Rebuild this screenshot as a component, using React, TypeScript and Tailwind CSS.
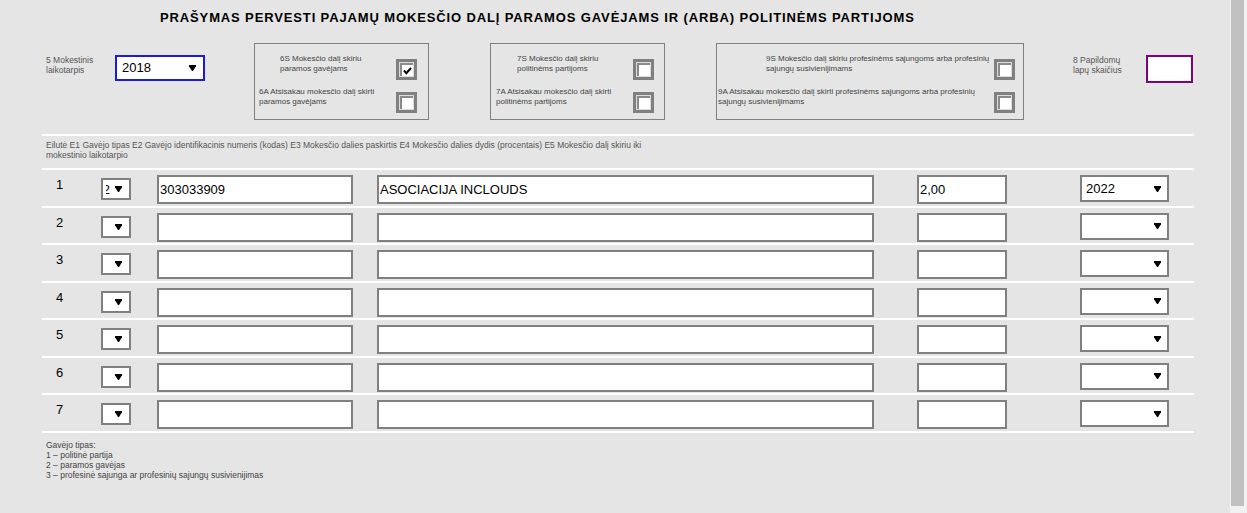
import React from "react";

const Arrow = () => (
  <svg width="7" height="6" viewBox="0 0 7 6" className="shrink-0">
    <path d="M0 0H7V1.2L4 6H3L0 1.2Z" fill="#000" />
  </svg>
);

function Cb({ checked = false, className = "" }: { checked?: boolean; className?: string }) {
  return (
    <div className={"w-[21px] h-[21px] border-[3px] border-[#808080] bg-[#dcdcdc] p-[1px] shrink-0 " + className}>
      <div className="w-full h-full bg-white border-t-2 border-l-2 border-t-[#8a8a8a] border-l-[#8a8a8a] pl-[1px] pt-[2px]">
        {checked && (
          <svg width="9" height="8" viewBox="0 0 9 8">
            <path d="M1 3.5 L3.3 6.2 L8 1" stroke="#000" strokeWidth="2" fill="none" />
          </svg>
        )}
      </div>
    </div>
  );
}

const rows = [
  { n: 1, type: "2", code: "303033909", name: "ASOCIACIJA INCLOUDS", pct: "2,00", year: "2022" },
  { n: 2 },
  { n: 3 },
  { n: 4 },
  { n: 5 },
  { n: 6 },
  { n: 7 },
] as { n: number; type?: string; code?: string; name?: string; pct?: string; year?: string }[];

export default function App() {
  return (
    <div className="flex w-[1247px] h-[513px] overflow-hidden bg-[#e5e5e5] font-['Liberation_Sans',Arial,sans-serif]">
      <div className="w-[1230px] h-[513px] shrink-0">
        <div className="w-[1194px] pl-[42px]">
          {/* Title */}
          <div className="h-[43px] pl-[118px] pt-[10px]">
            <div className="text-[13px] leading-[15px] font-bold tracking-[0.87px] text-black whitespace-nowrap">
              PRAŠYMAS PERVESTI PAJAMŲ MOKESČIO DALĮ PARAMOS GAVĖJAMS IR (ARBA) POLITINĖMS PARTIJOMS
            </div>
          </div>

          {/* Top row */}
          <div className="flex items-start h-[77px] mb-[14px]">
            <div className="ml-[4px] w-[69px] mt-[12px] text-[8.5px] leading-[10px] text-[#555]">
              5 Mokestinis
              <br />
              laikotarpis
            </div>
            <div className="w-[90px] h-[26px] mt-[12px] border-2 border-[#1a1ae6] bg-white flex items-center pl-[5px] pr-[7px]">
              <span className="text-[13px] text-black">2018</span>
              <span className="ml-auto">
                <Arrow />
              </span>
            </div>

            {/* Box 6 */}
            <div className="ml-[49px] w-[175px] h-[77px] border border-[#808080] pt-[10px] text-[8px] leading-[10px] text-[#444]">
              <div className="flex h-[33px]">
                <div className="pl-[25px] w-[141px]">
                  6S Mokesčio dalį skiriu
                  <br />
                  paramos gavėjams
                </div>
                <Cb checked className="mt-[5px]" />
              </div>
              <div className="flex h-[32px]">
                <div className="pl-[4px] w-[141px]">
                  6A Atsisakau mokesčio dalį skirti
                  <br />
                  paramos gavėjams
                </div>
                <Cb className="mt-[5px]" />
              </div>
            </div>

            {/* Box 7 */}
            <div className="ml-[61px] w-[175px] h-[77px] border border-[#808080] pt-[10px] text-[8px] leading-[10px] text-[#444]">
              <div className="flex h-[33px]">
                <div className="pl-[26px] w-[142px]">
                  7S Mokesčio dalį skiriu
                  <br />
                  politinėms partijoms
                </div>
                <Cb className="mt-[5px]" />
              </div>
              <div className="flex h-[32px]">
                <div className="pl-[5px] w-[142px]">
                  7A Atsisakau mokesčio dalį skirti
                  <br />
                  politinėms partijoms
                </div>
                <Cb className="mt-[5px]" />
              </div>
            </div>

            {/* Box 9 */}
            <div className="ml-[51px] w-[308px] h-[77px] border border-[#808080] pt-[10px] text-[8px] leading-[10px] text-[#444]">
              <div className="flex h-[33px]">
                <div className="pl-[49px] w-[277px] whitespace-nowrap">
                  9S Mokesčio dalį skiriu profesinėms sajungoms arba profesinių
                  <br />
                  sajungų susivienijimams
                </div>
                <Cb className="mt-[5px]" />
              </div>
              <div className="flex h-[32px]">
                <div className="pl-[1px] w-[277px] whitespace-nowrap">
                  9A Atsisakau mokesčio dalį skirti profesinėms sajungoms arba profesinių
                  <br />
                  sajungų susivienijimams
                </div>
                <Cb className="mt-[5px]" />
              </div>
            </div>

            <div className="ml-[49px] w-[73px] mt-[12px] text-[8.5px] leading-[10px] text-[#555]">
              8 Papildomų
              <br />
              lapų skaičius
            </div>
            <div className="w-[47px] h-[28px] mt-[12px] border-2 border-[#800080] bg-white" />
          </div>

          {/* Header */}
          <div className="border-t-2 border-white h-[34px] pt-[4px] pl-[4px] text-[8.5px] leading-[10px] text-[#555] whitespace-nowrap">
            Eilutė E1 Gavėjo tipas E2 Gavėjo identifikacinis numeris (kodas) E3 Mokesčio dalies paskirtis E4 Mokesčio dalies
            dydis (procentais) E5 Mokesčio dalį skiriu iki
            <br />
            mokestinio laikotarpio
          </div>

          {/* Rows */}
          {rows.map((r) => (
            <div key={r.n} className="border-t-2 border-white h-[37.5px] flex items-start">
              <div className="w-[59px] pl-[14px] mt-[7px] text-[13px] leading-[15px] text-black">{r.n}</div>
              <div className="w-[30px] h-[22px] mt-[8px] border-2 border-[#808080] bg-white flex items-center pr-[7px]">
                <div className="ml-[3px] w-[4px] overflow-hidden flex justify-end text-[13px] leading-[15px] text-black">
                  {r.type ? <span>{r.type}</span> : null}
                </div>
                <span className="ml-auto">
                  <Arrow />
                </span>
              </div>
              <div className="ml-[26px] w-[196px] h-[29px] mt-[5px] border-2 border-[#808080] bg-white pl-[1px] text-[13px] leading-[25px] text-black">
                {r.code}
              </div>
              <div className="ml-[24px] w-[497px] h-[29px] mt-[5px] border-2 border-[#808080] bg-white pl-[1px] text-[13px] leading-[25px] text-black">
                {r.name}
              </div>
              <div className="ml-[43px] w-[90px] h-[29px] mt-[5px] border-2 border-[#808080] bg-white pl-[1px] text-[13px] leading-[25px] text-black">
                {r.pct}
              </div>
              <div className="ml-[73px] w-[89px] h-[27px] mt-[5px] border-2 border-[#808080] bg-white flex items-center pl-[4px] pr-[6px]">
                <span className="text-[13px] text-black">{r.year}</span>
                <span className="ml-auto">
                  <Arrow />
                </span>
              </div>
            </div>
          ))}
          <div className="h-[2px] bg-white" />

          {/* Footer */}
          <div className="pt-[7px] pl-[4px] text-[8.5px] leading-[10px] text-[#444]">
            Gavėjo tipas:
            <br />1 – politinė partija
            <br />2 – paramos gavėjas
            <br />3 – profesinė sajunga ar profesinių sajungų susivienijimas
          </div>
        </div>
      </div>
      <div className="w-[17px] h-[513px] bg-[#f1f1f1] shrink-0">
        <div className="ml-[1px] w-[13px] h-[506px] bg-[#c1c1c1]" />
      </div>
    </div>
  );
}
